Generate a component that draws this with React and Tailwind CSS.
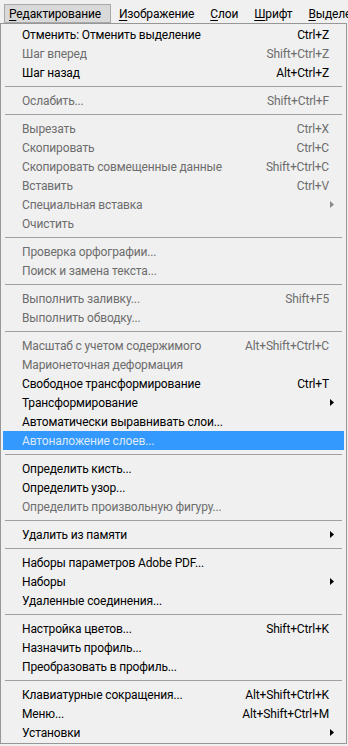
import React from "react";

const SEP = "sep";
const items = [
  { t: "Отменить: Отменить выделение", k: "Ctrl+Z" },
  { t: "Шаг вперед", k: "Shift+Ctrl+Z", d: true },
  { t: "Шаг назад", k: "Alt+Ctrl+Z" },
  SEP,
  { t: "Ослабить...", k: "Shift+Ctrl+F", d: true },
  SEP,
  { t: "Вырезать", k: "Ctrl+X", d: true },
  { t: "Скопировать", k: "Ctrl+C", d: true },
  { t: "Скопировать совмещенные данные", k: "Shift+Ctrl+C", d: true },
  { t: "Вставить", k: "Ctrl+V", d: true },
  { t: "Специальная вставка", d: true, sub: true },
  { t: "Очистить", d: true },
  SEP,
  { t: "Проверка орфографии...", d: true },
  { t: "Поиск и замена текста...", d: true },
  SEP,
  { t: "Выполнить заливку...", k: "Shift+F5", d: true },
  { t: "Выполнить обводку...", d: true },
  SEP,
  { t: "Масштаб с учетом содержимого", k: "Alt+Shift+Ctrl+C", d: true },
  { t: "Марионеточная деформация", d: true },
  { t: "Свободное трансформирование", k: "Ctrl+T" },
  { t: "Трансформирование", sub: true },
  { t: "Автоматически выравнивать слои..." },
  { t: "Автоналожение слоев...", hl: true },
  SEP,
  { t: "Определить кисть..." },
  { t: "Определить узор..." },
  { t: "Определить произвольную фигуру...", d: true },
  SEP,
  { t: "Удалить из памяти", sub: true },
  SEP,
  { t: "Наборы параметров Adobe PDF..." },
  { t: "Наборы", sub: true },
  { t: "Удаленные соединения..." },
  SEP,
  { t: "Настройка цветов...", k: "Shift+Ctrl+K" },
  { t: "Назначить профиль..." },
  { t: "Преобразовать в профиль..." },
  SEP,
  { t: "Клавиатурные сокращения...", k: "Alt+Shift+Ctrl+K" },
  { t: "Меню...", k: "Alt+Shift+Ctrl+M" },
  { t: "Установки", sub: true },
];

function Arrow({ grey }) {
  return (
    <svg width="4" height="7" viewBox="0 0 4 7" className="absolute right-[10px] top-[6px]">
      <path d="M0 0 L4 3.5 L0 7 Z" fill={grey ? "#8a8a8a" : "#000"} />
    </svg>
  );
}

function Top({ first, rest, active }) {
  return (
    <div className={active
      ? "h-[19px] pl-[4px] pr-[9px] flex items-center border border-[#a8a8a8] bg-[#d9d9d9]"
      : "h-[19px] px-[8px] flex items-center"}>
      <span><span className="underline underline-offset-2">{first}</span>{rest}</span>
    </div>
  );
}

export default function App() {
  return (
    <div className="w-[348px] h-[746px] bg-[#f0f0f0] overflow-hidden text-[12px] tracking-[-0.15px] text-black" style={{ fontFamily: 'Roboto, "Liberation Sans", sans-serif' }}>
      <div className="h-[23px] flex items-end pl-[4px] whitespace-nowrap">
        <Top first="Р" rest="едактирование" active />
        <Top first="И" rest="зображение" />
        <Top first="С" rest="лои" />
        <Top first="Ш" rest="рифт" />
        <Top first="В" rest="ыделение" />
      </div>
      <div className="w-[347px] h-[721px] border border-[#979797] bg-[#f0f0f0] pt-[1px] pb-[2px] px-[2px]">
        {items.map((it, i) =>
          it === SEP ? (
            <div key={i} className="h-[9px] flex items-center px-[2px]">
              <div className="w-full h-[1px] bg-[#a0a0a0]" />
            </div>
          ) : (
            <div key={i} className={"relative h-[19px] flex items-center pl-[19px] pr-[15px] whitespace-nowrap " +
              (it.hl ? "bg-[#3399ff] text-[#dce9f7]" : it.d ? "text-[#6d6d6d]" : "text-black")}>
              <span className="flex-1">{it.t}</span>
              {it.k && <span>{it.k}</span>}
              {it.sub && <Arrow grey={it.d} />}
            </div>
          )
        )}
      </div>
    </div>
  );
}
